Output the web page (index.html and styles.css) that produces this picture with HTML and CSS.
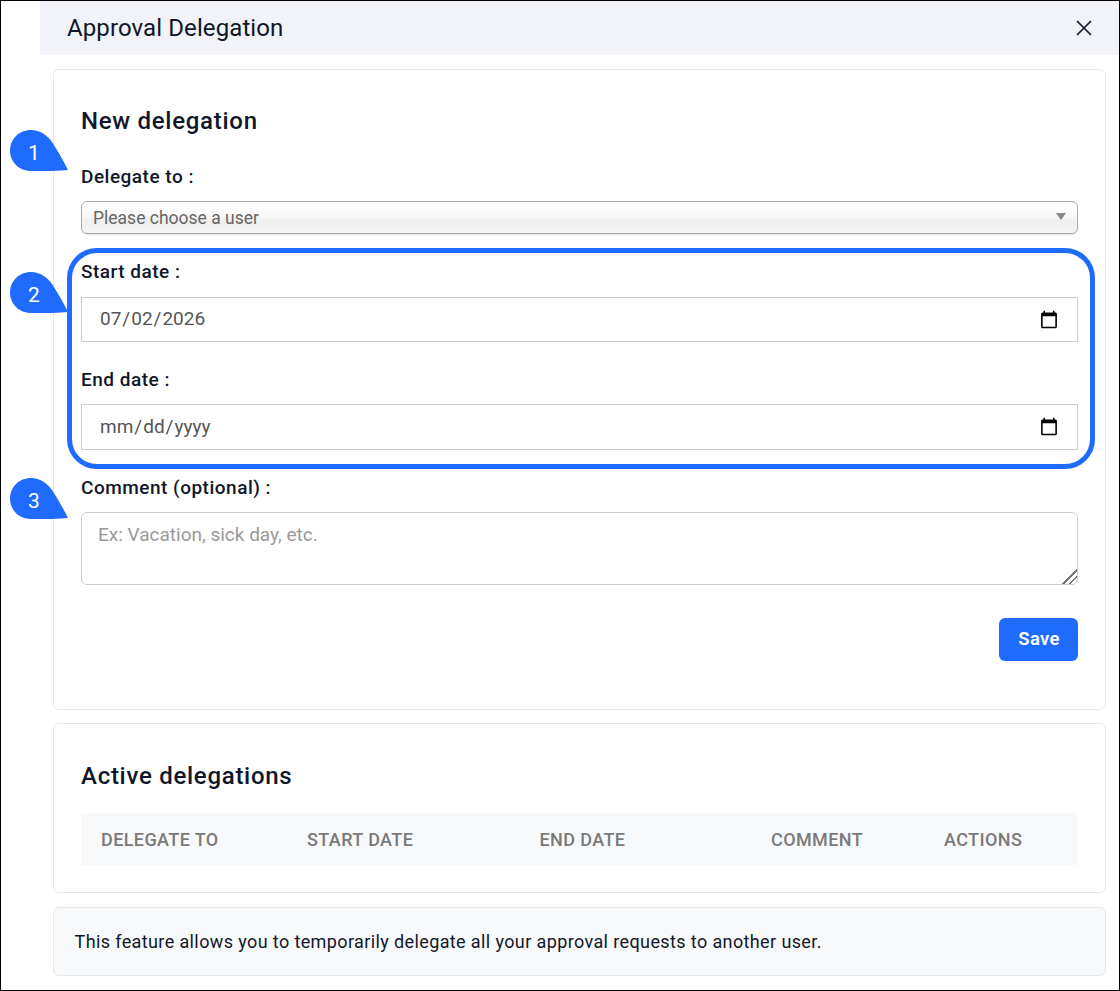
FILE: index.html
```html
<!DOCTYPE html>
<html lang="en">
<head>
<meta charset="utf-8">
<title>Approval Delegation</title>
<link rel="stylesheet" href="styles.css">
</head>
<body>
<div class="frame">
  <header class="modal-header">
    <h1 class="modal-title">Approval Delegation</h1>
    <button class="close" type="button" aria-label="Close">
      <svg width="16" height="16" viewBox="0 0 16 16"><path d="M1 1L15 15M15 1L1 15" fill="none" stroke="#10172a" stroke-width="1.7"/></svg>
    </button>
  </header>
  <main class="content">
    <section class="card form-card">
      <h2 class="card-title">New delegation</h2>
      <form class="form">
        <label class="label label-first">Delegate to :</label>
        <div class="select-wrap">
          <select class="select"><option>Please choose a user</option></select>
        </div>
        <label class="label label-start">Start date :</label>
        <input class="date" type="date" value="2026-07-02">
        <label class="label label-next">End date :</label>
        <input class="date date-end" type="date">
        <label class="label label-next">Comment (optional) :</label>
        <textarea class="comment" placeholder="Ex: Vacation, sick day, etc."></textarea>
        <div class="actions"><button class="save" type="button">Save</button></div>
      </form>
    </section>
    <section class="card table-card">
      <h2 class="card-title">Active delegations</h2>
      <table class="table">
        <thead>
          <tr>
            <th class="c1">Delegate to</th>
            <th class="c2">Start date</th>
            <th class="c3">End date</th>
            <th class="c4">Comment</th>
            <th class="c5">Actions</th>
          </tr>
        </thead>
      </table>
    </section>
    <section class="note">This feature allows you to temporarily delegate all your approval requests to another user.</section>
  </main>

  <div class="highlight"></div>
  <div class="pin pin-1"><svg width="58" height="44" viewBox="0 0 58 44"><path d="M21 0C30 0 37 5 42 12C47 20 52 28 58 40C50 41 35 41 21 41C9 41 0 32 0 20.500C0 9 9 0 21 0Z" fill="#1f6bff"/></svg><span class="pin-num">1</span></div>
  <div class="pin pin-2"><svg width="58" height="44" viewBox="0 0 58 44"><path d="M21 0C30 0 37 5 42 12C47 20 52 28 58 40C50 41 35 41 21 41C9 41 0 32 0 20.500C0 9 9 0 21 0Z" fill="#1f6bff"/></svg><span class="pin-num">2</span></div>
  <div class="pin pin-3"><svg width="58" height="44" viewBox="0 0 58 44"><path d="M21 0C30 0 37 5 42 12C47 20 52 28 58 40C50 41 35 41 21 41C9 41 0 32 0 20.500C0 9 9 0 21 0Z" fill="#1f6bff"/></svg><span class="pin-num">3</span></div>
</div>
</body>
</html>
```

FILE: styles.css
```css
* { box-sizing: border-box; }
html, body { margin: 0; padding: 0; background: #fff; }
body { font-family: Roboto, "Liberation Sans", sans-serif; color: #10172a; }

.frame {
  position: relative;
  width: 1120px;
  height: 991px;
  border: 1px solid #000;
  overflow: hidden;
  background: #fff;
}

.modal-header {
  margin-left: 39px;
  height: 54px;
  background: #f1f3f8;
  display: flex;
  align-items: center;
  justify-content: space-between;
  padding: 0 27px 0 27px;
}
.modal-title { margin: 0; font-size: 24px; letter-spacing: 0.1px; font-weight: 400; color: #10172a; line-height: 1; }
.close { border: 0; background: none; padding: 0; display: flex; }

.content {
  margin: 14px 13px 0 52px;
  display: flex;
  flex-direction: column;
  gap: 13px;
}

.card {
  border: 1px solid #e5e7eb;
  border-radius: 6px;
  background: #fff;
  padding: 0 27px;
}
.form-card { height: 641px; padding-top: 36px; }
.table-card { height: 170px; padding-top: 37px; }

.card-title {
  margin: 0;
  font-size: 24px;
  line-height: 30px;
  font-weight: 500;
  letter-spacing: 0.72px;
  color: #10172a;
}

.form { display: flex; flex-direction: column; }
.label {
  display: block;
  font-size: 19px;
  line-height: 20px;
  font-weight: 500;
  letter-spacing: 0.5px;
  color: #10172a;
}
.label-first { margin-top: 31px; }
.label-start { margin-top: 28px; }
.label-next { margin-top: 28px; }

.select-wrap { position: relative; margin-top: 14px; height: 33px; }
.select-wrap::after {
  content: "";
  position: absolute;
  right: 12px;
  top: 12px;
  border-left: 5px solid transparent;
  border-right: 5px solid transparent;
  border-top: 7px solid #888;
}
.select {
  appearance: none;
  width: 100%;
  height: 33px;
  border: 1px solid #a9a9a9;
  border-radius: 6px;
  padding: 0 11px;
  font: 400 17.500px Roboto, sans-serif;
  color: #666;
  background: linear-gradient(#fff 0%, #fafafa 40%, #efefef 60%, #f4f4f4 100%);
  box-shadow: 0 1px 1px rgba(0, 0, 0, 0.1);
}

.date {
  display: block;
  width: 100%;
  height: 45px;
  margin-top: 15px;
  border: 1px solid #ccc;
  border-radius: 0;
  background: #fff;
  padding: 0 18px 2px 17px;
  font: 400 19px Roboto, sans-serif;
  color: #555;
}
.date-end { height: 46px; margin-top: 14px; }
.date::-webkit-calendar-picker-indicator { opacity: 1; width: 20px; height: 20px; padding: 0; margin: 2px 0 0; }

.comment {
  display: block;
  width: 100%;
  height: 73px;
  margin-top: 14px;
  border: 1px solid #ccc;
  border-radius: 6px;
  padding: 10px 16px;
  font: 400 19px Roboto, sans-serif;
  color: #555;
  outline: 0;
}
.comment::placeholder { color: #999; opacity: 1; }
.comment::-webkit-resizer {
  background: linear-gradient(135deg,
    transparent 50%, #777 50%, #777 58%, transparent 58%,
    transparent 72%, #777 72%, #777 80%, transparent 80%);
}

.actions { display: flex; justify-content: flex-end; margin-top: 33px; }
.save {
  width: 79px;
  height: 43px;
  border: 0;
  border-radius: 6px;
  padding: 0 0 2px 1px;
  background: #1f6bff;
  color: #fff;
  font: 600 18.500px Roboto, sans-serif;
  letter-spacing: 0.3px;
}

.table {
  width: 997px;
  margin-top: 22px;
  border-collapse: collapse;
  table-layout: fixed;
  background: #f8f9fb;
}
.table th {
  height: 52px;
  padding: 0 0 0 20px;
  text-align: left;
  text-transform: uppercase;
  font-size: 18px;
  font-weight: 500;
  letter-spacing: 0.4px;
  color: #7a7a7a;
}
.c1 { width: 206px; }
.c2 { width: 232.500px; }
.c3 { width: 231.500px; }
.c4 { width: 173px; }
.c5 { width: 154px; }

.note {
  height: 69px;
  margin-top: 1px;
  border: 1px solid #e5e7eb;
  border-radius: 6px;
  background: #f8f9fb;
  padding: 0 21px 0 20.500px;
  display: flex;
  align-items: center;
  font-size: 18px;
  letter-spacing: 0.385px;
  color: #10172a;
}

.highlight {
  position: absolute;
  left: 66px;
  top: 247px;
  width: 1028px;
  height: 221px;
  border: 5px solid #1f6bff;
  border-radius: 30px;
  pointer-events: none;
}

.pin { position: absolute; left: 9px; width: 58px; height: 44px; }
.pin svg { display: block; }
.pin-1 { top: 129px; }
.pin-2 { top: 271px; }
.pin-3 { top: 477px; }
.pin-num {
  position: absolute;
  left: 0;
  top: 2px;
  width: 48px;
  height: 42px;
  display: flex;
  align-items: center;
  justify-content: center;
  color: #fff;
  font-size: 21px;
  line-height: 1;
}
```
